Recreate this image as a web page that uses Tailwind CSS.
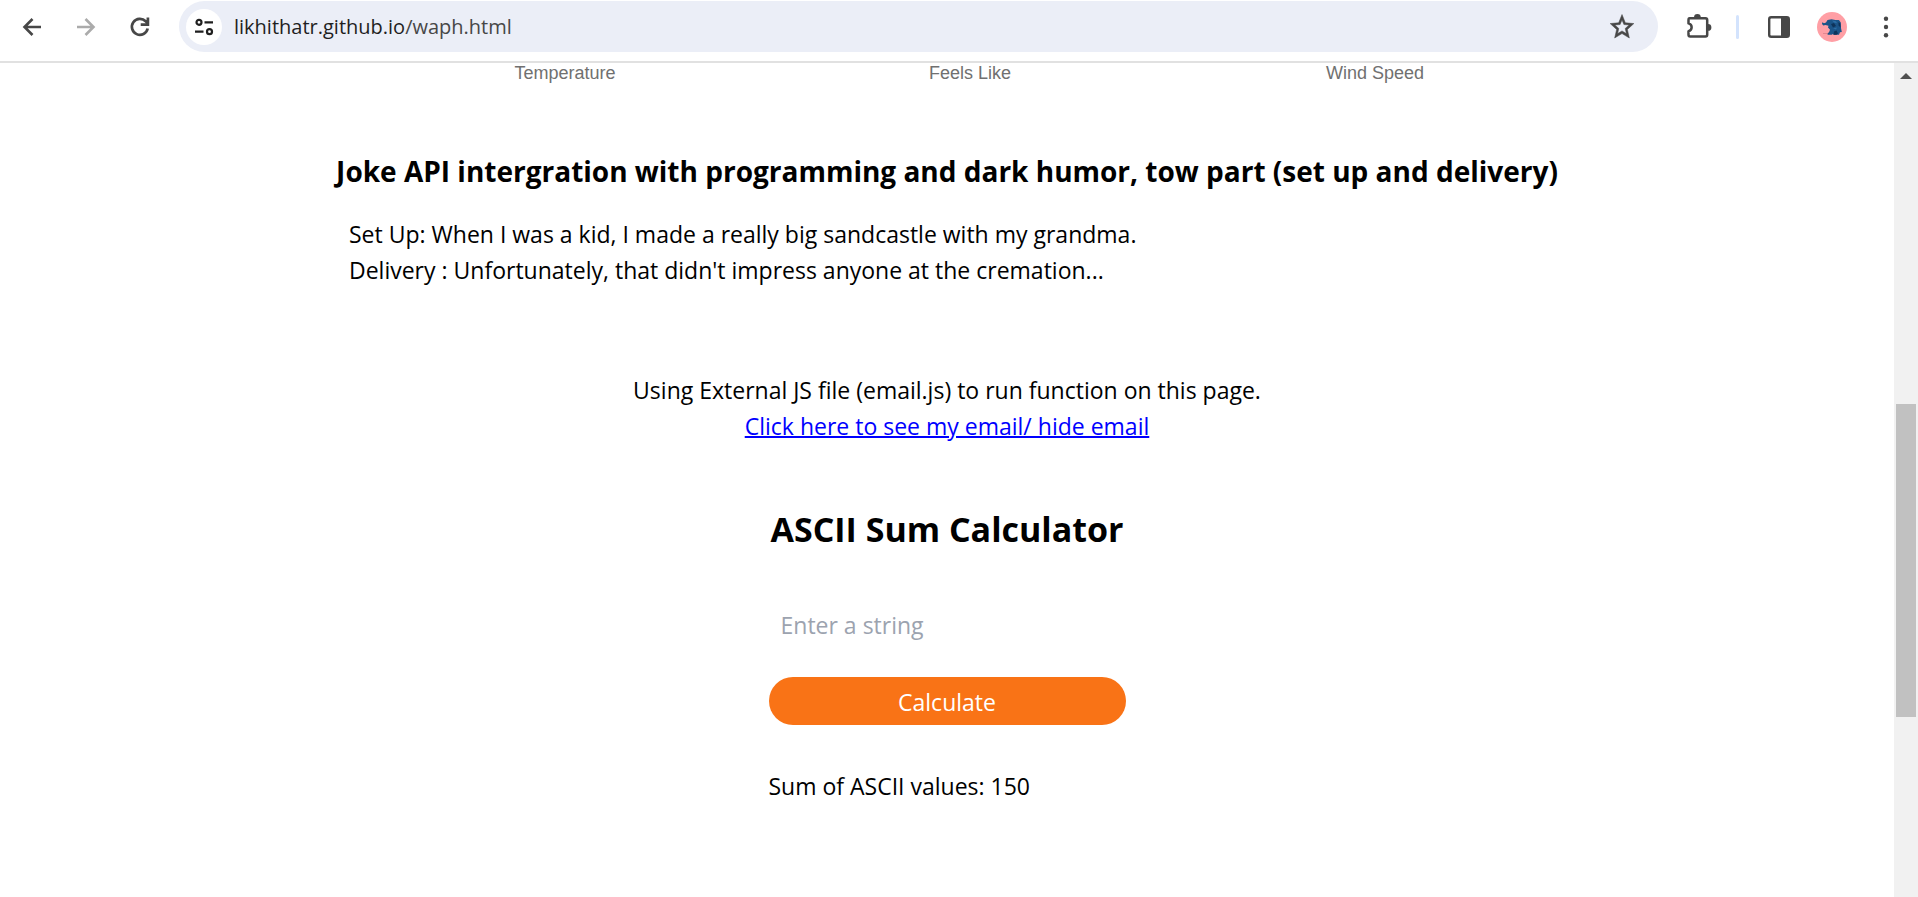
<!DOCTYPE html>
<html lang="en">
<head>
<meta charset="utf-8">
<title>waph</title>
<script src="https://cdn.jsdelivr.net/npm/@tailwindcss/browser@4"></script>
</head>
<body class="flex h-screen flex-col overflow-hidden bg-white font-['Segoe_UI','Open_Sans',sans-serif] text-[23px] leading-9 text-black">
<header class="flex h-[63px] shrink-0 items-start border-b-2 border-[#e1e1e1] pt-px pr-4 pl-[14px]">
  <nav class="flex h-[51px] items-center gap-[18px] pr-[21px] text-[#474747]" aria-label="Browser">
    <button class="grid h-9 w-9 place-items-center" aria-label="Back">
      <svg class="h-[30px] w-[30px]" viewBox="0 0 30 30" fill="none" stroke="currentColor" stroke-width="2.600"><path d="M24 15H8M15.500 7l-8 8 8 8"/></svg>
    </button>
    <button class="grid h-9 w-9 place-items-center text-[#ababab]" aria-label="Forward">
      <svg class="h-[30px] w-[30px]" viewBox="0 0 30 30" fill="none" stroke="currentColor" stroke-width="2.600"><path d="M6 15h16M14.500 7l8 8-8 8"/></svg>
    </button>
    <button class="grid h-9 w-9 place-items-center" aria-label="Reload">
      <svg class="h-[30px] w-[30px]" viewBox="0 0 30 30" fill="none" stroke="currentColor" stroke-width="2.700"><path d="M22.700 16.500a8 8 0 1 1-2-7.200l2.500 2.500M22.900 5.500v7.200h-7.200"/></svg>
    </button>
  </nav>
  <div class="flex h-[51px] flex-1 items-center rounded-full bg-[#ebeef7] pr-5 pl-[7px]">
    <button class="grid h-9 w-9 shrink-0 place-items-center rounded-full bg-white text-[#1f1f1f]" aria-label="Site information">
      <svg class="h-6 w-6" viewBox="0 0 24 24" fill="none" stroke="currentColor" stroke-width="2.200"><circle cx="7" cy="7.300" r="2.500"/><path d="M12.500 7.300h8.500M3 16.700h8.500"/><circle cx="17.500" cy="16.700" r="2.500"/></svg>
    </button>
    <div class="flex-1 pl-3 text-[20px] text-[#1f1f1f]">likhithatr.github.io<span class="text-[#474747]">/waph.html</span></div>
    <button class="grid h-8 w-8 place-items-center text-[#474747]" aria-label="Bookmark this page">
      <svg class="h-[30px] w-[30px]" viewBox="0 0 24 24" fill="currentColor" stroke="currentColor" stroke-width=".4"><path fill-rule="evenodd" d="M21.500 9.240l-6.840-.62L12 2 9.340 8.630 2.500 9.240l5.200 4.730L6.120 20.800 12 17.270l5.880 3.530-1.580-6.830zM12 15.100l-3.500 2.170.93-4.100-3.120-2.760 4.180-.38L12 6.300l1.510 3.730 4.180.38-3.120 2.760.93 4.100z"/></svg>
    </button>
  </div>
  <div class="flex h-[51px] items-center pl-6 text-[#474747]">
    <button class="grid h-8 w-8 place-items-center" aria-label="Extensions">
      <svg class="h-8 w-8" viewBox="0 0 32 32"><path fill="none" stroke="currentColor" stroke-width="2.500" stroke-linejoin="round" d="M7.500 7.200h16q1.700 0 1.700 1.700v14.900q0 1.700-1.700 1.700h-15.300q-1.700 0-1.700-1.700v-3.600c4.200-1 4.200-6.800 0-7.800V8.900q0-1.700 1-1.700z"/><path fill="currentColor" d="M12 6.500a3.400 3.400 0 0 1 6.800 0zM26 13a3.400 3.400 0 0 1 0 6.800z"/></svg>
    </button>
    <span class="ml-[22px] h-6 w-[3px] rounded-full bg-[#d3e3fd]"></span>
    <button class="ml-6 grid h-8 w-8 place-items-center" aria-label="Side panel">
      <svg class="h-8 w-8" viewBox="0 0 32 32"><rect x="6.200" y="6.200" width="19.600" height="19.600" rx="2" fill="none" stroke="currentColor" stroke-width="2.400"/><path fill="currentColor" d="M18 6h8v20h-8z"/></svg>
    </button>
    <button class="ml-[22px] h-[30px] w-[30px] overflow-hidden rounded-full bg-[#ff9fa5]" aria-label="Profile">
      <svg class="h-[30px] w-[30px]" viewBox="0 0 30 30"><path fill="#1b5488" d="M5.300 10.300l1.700.9 2-.7L10.500 8l4-.8 4 .8h3.500l1.800 2.500.2 5.500.8 4-1.800.3-1 2.500h-5.500l-.5-1-1 1h-4l-1-1 2-1.500 1-2.500-2-2.300.5-1.700-3-.8-2.200.4-1.300-1.500z"/><path fill="#0e335a" d="M14 12l3-1 2 3-3 1.500zM17 19.500l2.500-1 1.500 3-1.500 1.300h-3zM21.500 10l1.800 1.500.2 4-2-2z"/><path fill="#2d6fa6" d="M15 8.500l4 .8 1 2-3-.8zM16 16.500l4-1-1 2z"/><path stroke="#d77c85" stroke-width=".7" d="M6 21.500h5"/></svg>
    </button>
    <button class="ml-[23px] grid h-8 w-8 place-items-center" aria-label="Menu">
      <svg class="h-[30px] w-[30px]" viewBox="0 0 30 30" fill="currentColor"><circle cx="15" cy="6.700" r="2.200"/><circle cx="15" cy="15" r="2.200"/><circle cx="15" cy="23.300" r="2.200"/></svg>
    </button>
  </div>
</header>
<div class="flex min-h-0 flex-1">
  <main class="flex flex-1 flex-col items-center overflow-hidden">
    <div class="ml-[46px] grid w-full max-w-[1215px] grid-cols-3 text-center font-['Liberation_Sans',sans-serif] text-[18px] leading-5 text-[#707070]">
      <span>Temperature</span><span>Feels Like</span><span>Wind Speed</span>
    </div>
    <section class="mt-[67px] w-full max-w-[1244px]">
      <h2 class="text-center text-[28px] leading-[42px] font-bold whitespace-nowrap">Joke API intergration with programming and dark humor, tow part (set up and delivery)</h2>
      <div class="mt-6 px-6">
        <p>Set Up: When I was a kid, I made a really big sandcastle with my grandma.</p>
        <p>Delivery : Unfortunately, that didn't impress anyone at the cremation...</p>
      </div>
    </section>
    <section class="mt-[84px] text-center">
      <p>Using External JS file (email.js) to run function on this page.</p>
      <a href="#" class="text-[#0000ff] underline decoration-2">Click here to see my email/ hide email</a>
    </section>
    <section class="mt-[61px] flex w-[357px] flex-col">
      <h1 class="text-center text-[34px] leading-[48px] font-bold whitespace-nowrap">ASCII Sum Calculator</h1>
      <input type="text" aria-label="String" placeholder="Enter a string" class="mt-12 h-12 px-3 placeholder:text-[#9ca3af]">
      <button class="mt-7 h-12 rounded-full bg-[#f97316] pt-0.5 text-white">Calculate</button>
      <p class="mt-[43px]">Sum of ASCII values: 150</p>
    </section>
  </main>
  <div class="flex w-6 flex-col items-center bg-[#f1f1f1]">
    <svg class="mt-2 h-3 w-3" viewBox="0 0 12 12"><path fill="#505050" d="M0 8l6-6 6 6z"/></svg>
    <div class="mt-[321px] h-[313px] w-5 bg-[#c1c1c1]"></div>
  </div>
</div>
</body>
</html>
